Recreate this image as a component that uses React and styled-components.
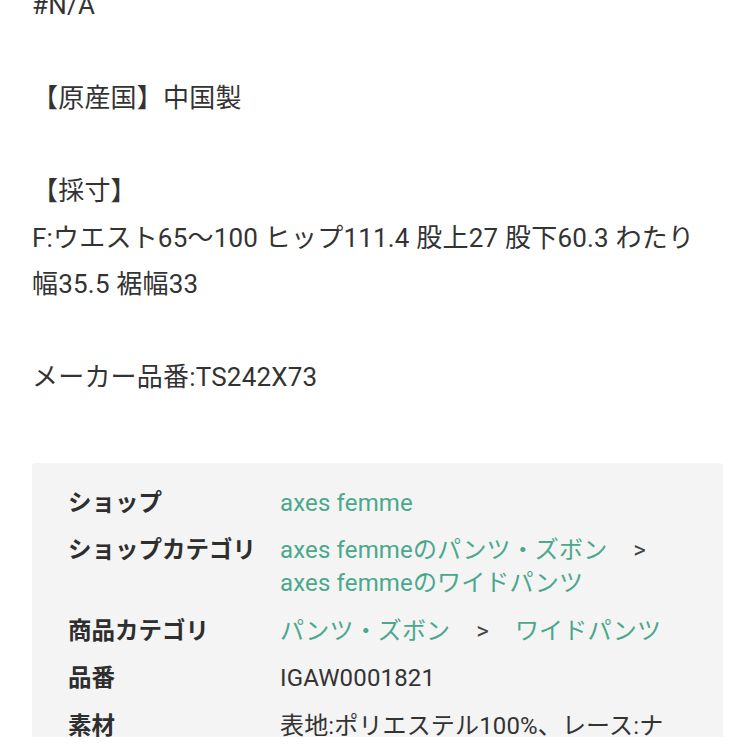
import React from "react";
import styled, { createGlobalStyle } from "styled-components";

const GlobalStyle = createGlobalStyle`
  html, body {
    margin: 0;
    padding: 0;
    background: #ffffff;
  }
  body {
    font-family: Roboto, "Noto Sans CJK JP", sans-serif;
    color: #333333;
  }
`;

// ページ全体
const Page = styled.div`
  width: 755px;
  height: 755px;
  overflow: hidden;
  box-sizing: border-box;
  padding: 0 32px;
  margin-top: -18px;
`;

// 商品説明のテキスト
const Description = styled.div`
  font-size: 26px;
  line-height: 46.5px;
  color: #333333;
  letter-spacing: 0.2px;
`;

const Line = styled.div`
  min-height: 46.5px;
  white-space: nowrap;
`;

// 商品情報パネル
const InfoPanel = styled.div`
  margin-top: 62px;
  background: #f4f4f4;
  border-radius: 4px;
  padding: 24px 36px 0;
  display: grid;
  grid-template-columns: 212px 1fr;
  row-gap: 14.5px;
`;

const Label = styled.div`
  font-size: 23.5px;
  font-weight: 700;
  line-height: 33px;
  color: #2e2e2e;
  white-space: nowrap;
`;

const Value = styled.div`
  font-size: 24px;
  line-height: 33px;
  letter-spacing: 0.15px;
  white-space: nowrap;
  color: ${(p) => (p.$link ? "#4aa88c" : "#333333")};
`;

const Sep = styled.span`
  color: #444444;
  margin: 0 26px;
`;

const App = () => {
  return (
    <>
      <GlobalStyle />
      <Page>
        <Description>
          <Line>#N/A</Line>
          <Line />
          <Line>【原産国】中国製</Line>
          <Line />
          <Line>【採寸】</Line>
          <Line>F:ウエスト65〜100 ヒップ111.4 股上27 股下60.3 わたり</Line>
          <Line>幅35.5 裾幅33</Line>
          <Line />
          <Line>メーカー品番:TS242X73</Line>
        </Description>
        <InfoPanel>
          <Label>ショップ</Label>
          <Value $link>axes femme</Value>

          <Label>ショップカテゴリ</Label>
          <Value $link>
            axes femmeのパンツ・ズボン<Sep>&gt;</Sep>
            <br />
            axes femmeのワイドパンツ
          </Value>

          <Label>商品カテゴリ</Label>
          <Value $link>
            パンツ・ズボン<Sep>&gt;</Sep>ワイドパンツ
          </Value>

          <Label>品番</Label>
          <Value>IGAW0001821</Value>

          <Label>素材</Label>
          <Value>
            表地:ポリエステル100%、レース:ナ
            <br />
            イロン97%、ポリウレタン3%、裏地
          </Value>
        </InfoPanel>
      </Page>
    </>
  );
};

export default App;
